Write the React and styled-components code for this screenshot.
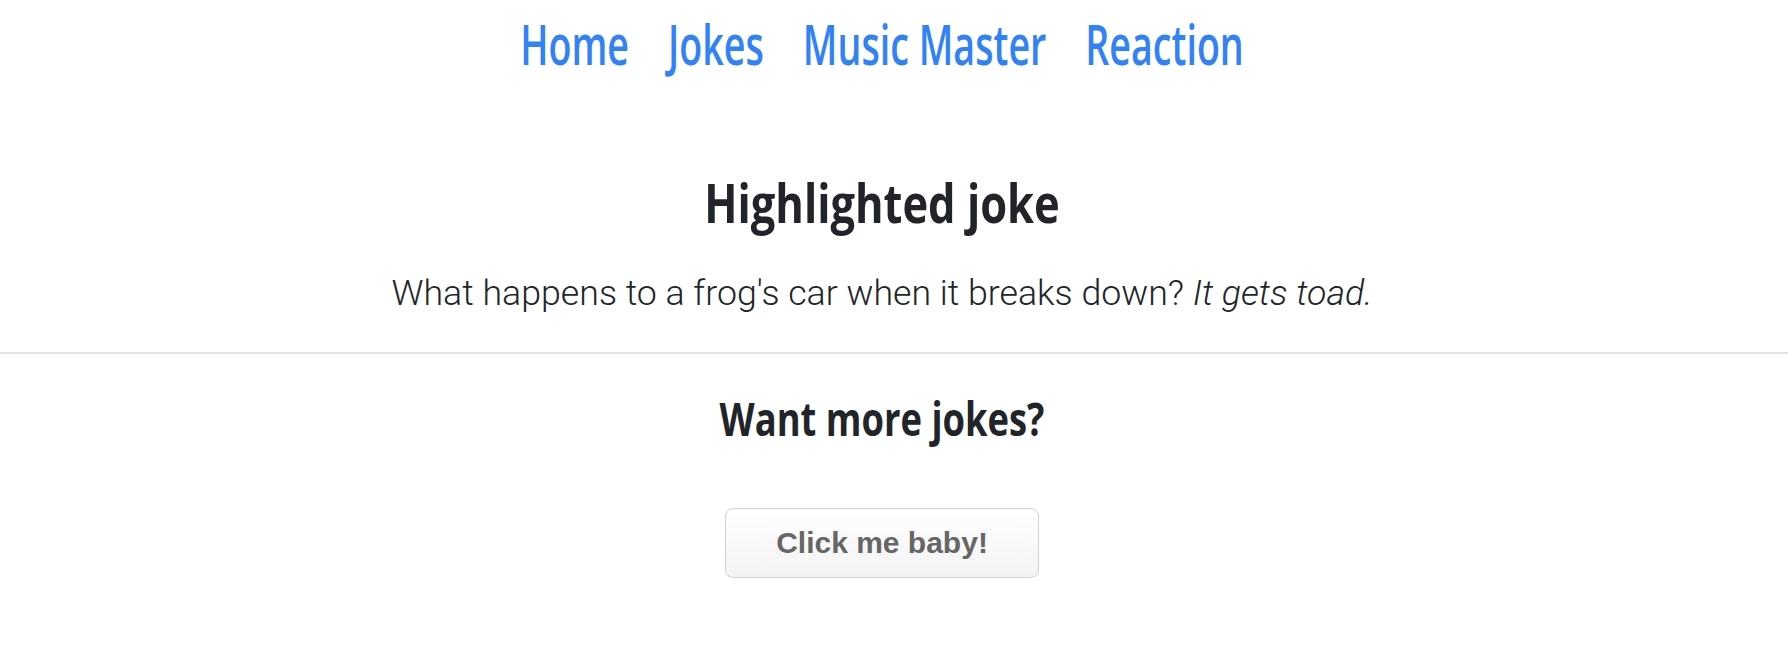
import React from 'react'
import styled, { createGlobalStyle } from 'styled-components'

const GlobalStyle = createGlobalStyle`
    body {
        margin: 0;
        background: #fff;
        font-family: "Open Sans", sans-serif;
    }
`

const Page = styled.div`
    display: flex;
    flex-direction: column;
    align-items: center;
    padding-right: 24px;
`

// the reference uses a condensed face, so text blocks are narrowed around their centre
const Squeeze = styled.div`
    width: 100%;
    display: flex;
    justify-content: center;
    transform: scaleX(${props => props.$x});
    transform-origin: center;
`

const Nav = styled(Squeeze)`
    gap: 58px;
    padding-top: 15px;
`
const NavLink = styled.a`
    font-family: "Open Sans", sans-serif;
    font-weight: 600;
    font-size: 56px;
    line-height: 56px;
    color: #3182f6;
    text-decoration: none;
    white-space: nowrap;
`

const Heading = styled.h2`
    margin: ${props => props.$top}px 0 0;
    font-family: "Open Sans", sans-serif;
    font-weight: 700;
    font-size: ${props => props.$size}px;
    line-height: 1;
    color: #212529;
    white-space: nowrap;
`

const JokeText = styled.p`
    margin: 44px 0 0;
    font-family: Roboto, sans-serif;
    font-weight: 300;
    font-size: 35px;
    line-height: 42px;
    color: #212529;
    white-space: nowrap;
    & em {
        font-style: italic;
    }
`

const Divider = styled.hr`
    align-self: stretch;
    margin: 37px -24px 0 0;
    border: none;
    border-top: 2px solid #e4e4e4;
`

const MoreButton = styled.button`
    margin-top: 67px;
    height: 70px;
    padding: 0 50px;
    border: 1px solid #d2d2d2;
    border-radius: 8px;
    background: linear-gradient(#ffffff, #f3f3f3);
    font-family: "Liberation Sans", Arial, sans-serif;
    font-weight: 700;
    font-size: 30px;
    color: #666;
    cursor: pointer;
`

function App() {
    const links = ['Home', 'Jokes', 'Music Master', 'Reaction']
    return (
        <Page>
            <GlobalStyle />
            <Nav $x={0.672}>
                {links.map(link => (
                    <NavLink href="#" key={link}>{link}</NavLink>
                ))}
            </Nav>
            <Squeeze $x={0.82}>
                <Heading $top={105} $size={53}>Highlighted joke</Heading>
            </Squeeze>
            <Squeeze $x={1.02}>
                <JokeText>
                    What happens to a frog's car when it breaks down? <em>It gets toad.</em>
                </JokeText>
            </Squeeze>
            <Divider />
            <Squeeze $x={0.79}>
                <Heading $top={41} $size={46}>Want more jokes?</Heading>
            </Squeeze>
            <MoreButton>Click me baby!</MoreButton>
        </Page>
    )
}

export default App
